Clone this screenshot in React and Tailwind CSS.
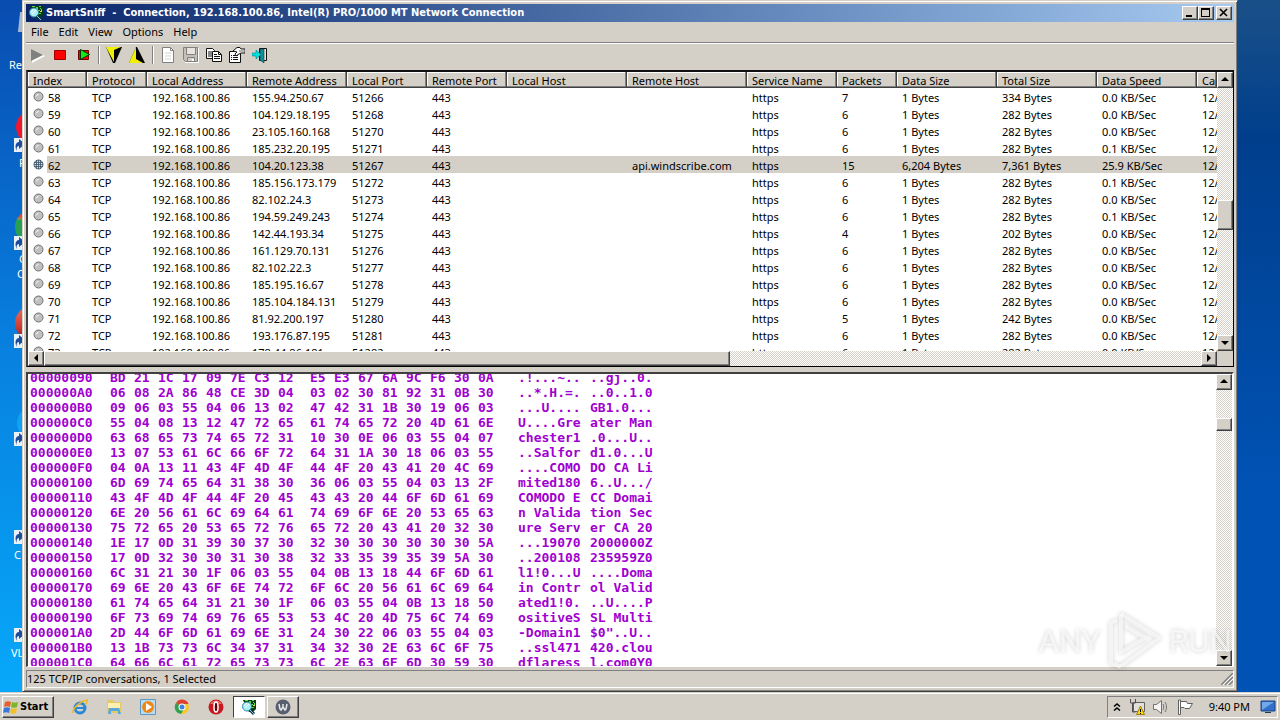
import React from "react";
import clsx from "clsx";

const columns = [
  { label: "Index", width: "w-[59px]" },
  { label: "Protocol", width: "w-[60px]" },
  { label: "Local Address", width: "w-[100px]" },
  { label: "Remote Address", width: "w-[100px]" },
  { label: "Local Port", width: "w-[80px]" },
  { label: "Remote Port", width: "w-[80px]" },
  { label: "Local Host", width: "w-[120px]" },
  { label: "Remote Host", width: "w-[120px]" },
  { label: "Service Name", width: "w-[90px]" },
  { label: "Packets", width: "w-[60px]" },
  { label: "Data Size", width: "w-[100px]" },
  { label: "Total Size", width: "w-[100px]" },
  { label: "Data Speed", width: "w-[100px]" },
  { label: "Cap", width: "" },
];

// index, remote address, local port, remote host, packets, data, total, speed
const rows = [
  [58, "155.94.250.67", 51266, "", 7, "1 Bytes", "334 Bytes", "0.0 KB/Sec"],
  [59, "104.129.18.195", 51268, "", 6, "1 Bytes", "282 Bytes", "0.0 KB/Sec"],
  [60, "23.105.160.168", 51270, "", 6, "1 Bytes", "282 Bytes", "0.0 KB/Sec"],
  [61, "185.232.20.195", 51271, "", 6, "1 Bytes", "282 Bytes", "0.1 KB/Sec"],
  [62, "104.20.123.38", 51267, "api.windscribe.com", 15, "6,204 Bytes", "7,361 Bytes", "25.9 KB/Sec"],
  [63, "185.156.173.179", 51272, "", 6, "1 Bytes", "282 Bytes", "0.1 KB/Sec"],
  [64, "82.102.24.3", 51273, "", 6, "1 Bytes", "282 Bytes", "0.0 KB/Sec"],
  [65, "194.59.249.243", 51274, "", 6, "1 Bytes", "282 Bytes", "0.1 KB/Sec"],
  [66, "142.44.193.34", 51275, "", 4, "1 Bytes", "202 Bytes", "0.0 KB/Sec"],
  [67, "161.129.70.131", 51276, "", 6, "1 Bytes", "282 Bytes", "0.0 KB/Sec"],
  [68, "82.102.22.3", 51277, "", 6, "1 Bytes", "282 Bytes", "0.0 KB/Sec"],
  [69, "185.195.16.67", 51278, "", 6, "1 Bytes", "282 Bytes", "0.0 KB/Sec"],
  [70, "185.104.184.131", 51279, "", 6, "1 Bytes", "282 Bytes", "0.0 KB/Sec"],
  [71, "81.92.200.197", 51280, "", 5, "1 Bytes", "242 Bytes", "0.0 KB/Sec"],
  [72, "193.176.87.195", 51281, "", 6, "1 Bytes", "282 Bytes", "0.0 KB/Sec"],
  [73, "178.44.86.181", 51282, "", 6, "1 Bytes", "282 Bytes", "0.0 KB/Sec"],
];

const dump = [
  "00000090 BD 21 1C 17 09 7E C3 12 E5 E3 67 6A 9C F6 30 0A",
  "000000A0 06 08 2A 86 48 CE 3D 04 03 02 30 81 92 31 0B 30",
  "000000B0 09 06 03 55 04 06 13 02 47 42 31 1B 30 19 06 03",
  "000000C0 55 04 08 13 12 47 72 65 61 74 65 72 20 4D 61 6E",
  "000000D0 63 68 65 73 74 65 72 31 10 30 0E 06 03 55 04 07",
  "000000E0 13 07 53 61 6C 66 6F 72 64 31 1A 30 18 06 03 55",
  "000000F0 04 0A 13 11 43 4F 4D 4F 44 4F 20 43 41 20 4C 69",
  "00000100 6D 69 74 65 64 31 38 30 36 06 03 55 04 03 13 2F",
  "00000110 43 4F 4D 4F 44 4F 20 45 43 43 20 44 6F 6D 61 69",
  "00000120 6E 20 56 61 6C 69 64 61 74 69 6F 6E 20 53 65 63",
  "00000130 75 72 65 20 53 65 72 76 65 72 20 43 41 20 32 30",
  "00000140 1E 17 0D 31 39 30 37 30 32 30 30 30 30 30 30 5A",
  "00000150 17 0D 32 30 30 31 30 38 32 33 35 39 35 39 5A 30",
  "00000160 6C 31 21 30 1F 06 03 55 04 0B 13 18 44 6F 6D 61",
  "00000170 69 6E 20 43 6F 6E 74 72 6F 6C 20 56 61 6C 69 64",
  "00000180 61 74 65 64 31 21 30 1F 06 03 55 04 0B 13 18 50",
  "00000190 6F 73 69 74 69 76 65 53 53 4C 20 4D 75 6C 74 69",
  "000001A0 2D 44 6F 6D 61 69 6E 31 24 30 22 06 03 55 04 03",
  "000001B0 13 1B 73 73 6C 34 37 31 34 32 30 2E 63 6C 6F 75",
  "000001C0 64 66 6C 61 72 65 73 73 6C 2E 63 6F 6D 30 59 30",
];

const toAscii = (bytes) =>
  bytes
    .map((b) => {
      const code = parseInt(b, 16);
      return code >= 0x20 && code < 0x7f ? String.fromCharCode(code) : ".";
    })
    .join("");

const raised =
  "border border-t-white border-l-white border-r-[#404040] border-b-[#404040] bg-[#d4d0c8] shadow-[inset_-1px_-1px_0_#808080]";
const dither =
  "bg-[repeating-conic-gradient(#ffffff_0_25%,#d4d0c8_0_50%)] bg-[length:2px_2px]";

function Icon({ children, size = "size-4", box = "0 0 16 16" }) {
  return (
    <svg className={clsx("shrink-0", size)} viewBox={box} aria-hidden="true">
      {children}
    </svg>
  );
}

function SnifferIcon({ size = "size-4" }) {
  return (
    <Icon size={size}>
      <path d="M2 1h13v9l-3 3H8L5 8z" fill="#0a3c14" />
      <path d="M4 1h3v1H4zM8 2h2v2H8zM11 1h2v1h-2zM13 4h1v3h-1zM10 5h2v1h-2zM10 8h3v1h-3zM12 3h1v1h-1z" fill="#58e048" />
      <path d="M12 6h2v1h-2zM9 4h1v1H9z" fill="#e8e040" />
      <circle cx="6" cy="7.500" r="4.500" fill="#a8f0f8" stroke="#3088a0" />
      <path d="M3 7l3-3M4 9l4-4" stroke="#fff" />
      <path d="M9 11l4 4" stroke="#103848" strokeWidth="3" />
      <path d="M9 11l4 4" stroke="#7cc8e0" />
    </Icon>
  );
}

function TitleBar() {
  const control =
    "flex h-[14px] w-4 items-center justify-center " + raised;
  return (
    <div className="flex h-[18px] shrink-0 items-center bg-linear-to-r from-[#0a246a] to-[#a6caf0] pr-[2px] pl-[2px]">
      <SnifferIcon />
      <h1 className="ml-[2px] flex-1 whitespace-pre font-['DejaVu_Sans_Condensed','Noto_Sans',sans-serif] text-[11px] font-bold text-white">
        SmartSniff  -  Connection, 192.168.100.86, Intel(R) PRO/1000 MT Network Connection
      </h1>
      <button className={control} aria-label="Minimize">
        <Icon size="h-3 w-3" box="0 0 12 12">
          <path d="M2 8h6v2H2z" />
        </Icon>
      </button>
      <button className={control} aria-label="Maximize">
        <Icon size="h-3 w-3" box="0 0 12 12">
          <path d="M1 1h9v9H1zM2 3v6h7V3z" fillRule="evenodd" />
        </Icon>
      </button>
      <button className={clsx(control, "ml-[2px]")} aria-label="Close">
        <Icon size="h-3 w-3" box="0 0 12 12">
          <path d="M2 2l7 7M9 2L2 9" stroke="#000" strokeWidth="1.600" />
        </Icon>
      </button>
    </div>
  );
}

function Separator() {
  return (
    <span className="mx-[3px] h-[18px] w-[2px] border-l border-l-[#808080] border-r border-r-white" />
  );
}

const tools = [
  {
    name: "Start capture",
    art: (
      <>
        <path d="M3 3l13 6-13 7z" fill="#fff" />
        <path d="M2 2l12 6-12 6z" fill="#808080" />
      </>
    ),
  },
  {
    name: "Stop capture",
    art: <path d="M2.500 3.500h11v9h-11z" fill="#f00" stroke="#a00000" />,
  },
  {
    name: "Restart capture",
    art: (
      <>
        <path d="M3.500 3.500h10v9h-10z" fill="#f00" stroke="#700000" />
        <path d="M5.500 2.500l9 5-9 5z" fill="#18e818" stroke="#003800" />
      </>
    ),
  },
  "sep",
  {
    name: "Capture filter",
    art: (
      <>
        <path d="M0 0h16L9 16H7z" fill="#000" />
        <path d="M0 0h15L8 3v12z" fill="#f0f000" />
      </>
    ),
  },
  {
    name: "Display filter",
    art: (
      <>
        <path d="M7 0h1l8 16H0z" fill="#000" />
        <path d="M7 0v12l7 4H0z" fill="#f0f000" />
      </>
    ),
  },
  "sep",
  {
    name: "New",
    art: (
      <>
        <path d="M2.500 .5h8l3 3v12h-11z" fill="#fff" stroke="#808080" />
        <path d="M10.500 .5v3h3" fill="none" stroke="#808080" />
        <path d="M5 6h6M5 9h6M5 12h6" stroke="#d4d0c8" />
      </>
    ),
  },
  {
    name: "Save",
    art: (
      <>
        <path d="M.5 .5h14v14H2.500l-2-2z" fill="#c4c0b8" stroke="#808080" />
        <path d="M3.500 .5h9v7h-9z" fill="#e8e4dc" stroke="#808080" />
        <path d="M4.500 10.500h7v4h-7z" fill="#d4d0c8" stroke="#808080" />
        <path d="M9 12h2v2H9z" fill="#fff" />
        <path d="M15.500 1v14.500H2" fill="none" stroke="#fff" />
      </>
    ),
  },
  {
    name: "Copy",
    art: (
      <>
        <path d="M.5 1.500h6l2 2v8h-8z" fill="#fff" stroke="#101010" />
        <path d="M2 5h4M2 7h4M2 9h4" stroke="#101010" />
        <path d="M6.500 4.500h6l3 3v7h-9z" fill="#fff" stroke="#101010" />
        <path d="M12.500 4.500v3h3M8 7.500h3M8 9.500h6M8 11.500h6" fill="none" stroke="#101010" />
      </>
    ),
  },
  {
    name: "Properties",
    art: (
      <>
        <path d="M.5 4.500h11v11H.5z" fill="#fff" stroke="#101010" />
        <path d="M2 8.500h1M4 8.500h5M2 10.500h1M4 10.500h5M2 12.500h1M4 12.500h5" stroke="#101010" />
        <path d="M4 4l4-3.500h3l1 1.500h4v4h-4l-2 1-3 2-1-2 2-2z" fill="#fff" stroke="#101010" />
        <path d="M10 3h5v2h-5z" fill="#b8b4ac" />
      </>
    ),
  },
  {
    name: "Exit",
    art: (
      <>
        <path d="M7.500 1.500h7v12h-7z" fill="#e8e4dc" stroke="#101010" />
        <path d="M8 2h4v14l-4-3z" fill="#109098" stroke="#003840" strokeWidth=".6" />
        <path d="M0 6h4V3l5 4.500L4 12V9H0z" fill="#00e0e0" stroke="#006868" strokeWidth=".5" />
      </>
    ),
  },
];

function Toolbar() {
  return (
    <div className="flex h-[27px] shrink-0 items-center border-t border-t-white pb-1">
      {tools.map((tool, i) =>
        tool === "sep" ? (
          <Separator key={i} />
        ) : (
          <button
            key={tool.name}
            aria-label={tool.name}
            className="flex h-[22px] w-[23px] items-center justify-start pl-[3px]"
          >
            <Icon>{tool.art}</Icon>
          </button>
        )
      )}
    </div>
  );
}

function Arrow({ dir, className }) {
  const d = {
    up: "M1 6h8L5 2z",
    down: "M1 3h8L5 7z",
    left: "M7 1v8L3 5z",
    right: "M3 1v8l4-4z",
  };
  return (
    <button
      aria-label={"Scroll " + dir}
      className={clsx("flex shrink-0 items-center justify-center", raised, className)}
    >
      <Icon size="size-[10px]" box="0 0 10 10">
        <path d={d[dir]} />
      </Icon>
    </button>
  );
}

function VScroll({ before, thumb, after }) {
  return (
    <div className={clsx("flex w-4 shrink-0 flex-col", dither)}>
      <Arrow dir="up" className="h-4 w-4" />
      <div className={before} />
      <div className={clsx("shrink-0", raised, thumb)} />
      <div className={after} />
      <Arrow dir="down" className="h-4 w-4" />
    </div>
  );
}

function StatusDot({ active }) {
  return (
    <Icon size="size-[11px]" box="0 0 11 11">
      {active ? (
        <>
          <circle cx="5.500" cy="5.500" r="4.500" fill="#c8dcf0" stroke="#506070" />
          <path d="M3.500 1v9M5.500 1v9M7.500 1v9M1 3.500h9M1 5.500h9M1 7.500h9" stroke="#405468" strokeWidth=".8" />
        </>
      ) : (
        <>
          <circle cx="5.500" cy="5.500" r="4.500" fill="#c0c0c0" stroke="#707070" />
          <path d="M3 5.500L5.500 3" stroke="#fff" />
        </>
      )}
    </Icon>
  );
}

function ConnectionList() {
  return (
    <section className="flex min-h-0 flex-[296_1_0%] flex-col border-t-2 border-r border-b border-l-2 border-t-[#101010] border-r-black border-b-black border-l-[#404040] bg-white">
      <div className="flex min-h-0 flex-1">
        <div className="min-w-0 flex-1 overflow-hidden">
          <table className="w-full table-fixed border-separate border-spacing-0">
            <thead>
              <tr className="h-4">
                {columns.map((col) => (
                  <th
                    key={col.label}
                    className={clsx(
                      "h-4 overflow-hidden whitespace-nowrap border-r border-b border-[#404040] bg-[#d4d0c8] pt-[2px] pl-[5px] text-left font-normal leading-[13px] shadow-[inset_-1px_-1px_0_#808080,inset_1px_1px_0_#ffffff]",
                      col.width
                    )}
                  >
                    {col.label}
                  </th>
                ))}
              </tr>
            </thead>
            <tbody>
              {rows.map(([index, remote, port, host, packets, data, total, speed]) => {
                const selected = index === 62;
                const cells = ["TCP", "192.168.100.86", remote, port, 443, "", host, "https", packets, data, total, speed, "12/"];
                return (
                  <tr key={index} className="h-[17px]">
                    <td className="p-0">
                      <div className="flex h-[17px] items-center pl-[5px]">
                        <StatusDot active={selected} />
                        <span
                          className={clsx(
                            "ml-[3px] flex-1 pt-[2px] pl-px leading-[15px]",
                            selected && "bg-[#d4d0c8]"
                          )}
                        >
                          {index}
                        </span>
                      </div>
                    </td>
                    {cells.map((cell, i) => (
                      <td
                        key={i}
                        className={clsx(
                          "overflow-hidden whitespace-nowrap pt-[2px] pr-0 pl-[5px] leading-[15px]",
                          selected && "bg-[#d4d0c8]"
                        )}
                      >
                        {cell}
                      </td>
                    ))}
                  </tr>
                );
              })}
            </tbody>
          </table>
        </div>
        <VScroll before="flex-[112]" thumb="h-[30px]" after="flex-[105]" />
      </div>
      <div className="flex h-[15px] shrink-0">
        <div className={clsx("flex flex-1", dither)}>
          <Arrow dir="left" className="h-[15px] w-4" />
          <div className={clsx("flex-[685]", raised)} />
          <div className="flex-[472]" />
          <Arrow dir="right" className="h-[15px] w-4" />
        </div>
        <div className="w-4 bg-[#d4d0c8]" />
      </div>
    </section>
  );
}

function HexView() {
  return (
    <section className="flex min-h-0 flex-[295_1_0%] border-t-2 border-r-2 border-b border-l-2 border-t-[#404040] border-r-white border-b-white border-l-[#404040] bg-white">
      <div className="min-w-0 flex-1 overflow-hidden pl-[2px]">
        <table className="-mt-1 w-[624px] table-fixed border-collapse font-['DejaVu_Sans_Mono',monospace] text-[13px] font-bold text-[#a000d0]">
          <colgroup>
            <col className="w-20" />
            {Array.from({ length: 16 }, (_, i) => (
              <col key={i} className={i === 7 ? "w-8" : i === 15 ? "w-10" : "w-6"} />
            ))}
            <col className="w-[72px]" />
            <col className="w-16" />
          </colgroup>
          <tbody>
            {dump.map((line) => {
              const [offset, ...bytes] = line.split(" ");
              return (
                <tr key={offset} className="h-[15px] leading-[15px]">
                  <td className="p-0">{offset}</td>
                  {bytes.map((b, i) => (
                    <td key={i} className="p-0">
                      {b}
                    </td>
                  ))}
                  <td className="whitespace-pre p-0">{toAscii(bytes.slice(0, 8))}</td>
                  <td className="whitespace-pre p-0">{toAscii(bytes.slice(8))}</td>
                </tr>
              );
            })}
          </tbody>
        </table>
      </div>
      <VScroll before="flex-[28]" thumb="h-[13px]" after="flex-[219]" />
    </section>
  );
}

function Watermark() {
  return (
    <div className="pointer-events-none absolute right-[5px] bottom-[20px] flex items-center gap-[6px] font-['Roboto',sans-serif] text-[32px] leading-[56px] text-white/60 drop-shadow-[0_0_2px_rgba(0,0,0,0.3)]">
      <span>ANY</span>
      <svg className="h-[60px] w-[56px]" viewBox="0 0 56 60" fill="none" stroke="currentColor" strokeWidth="4" aria-hidden="true">
        <path d="M14 3l38 24-38 28" strokeLinejoin="round" />
        <path d="M14 3v38l24-14-20-12" strokeLinejoin="round" />
        <path d="M10 9l-6 3v40l10 4" strokeLinejoin="round" />
      </svg>
      <span>RUN</span>
    </div>
  );
}

function SnifferWindow() {
  return (
    <main className="relative flex min-w-0 flex-1 flex-col border border-t-[#d4d0c8] border-r-[#404040] border-b-[#404040] border-l-[#d4d0c8] bg-[#d4d0c8] p-[3px] shadow-[inset_1px_1px_0_#ffffff,inset_-1px_-1px_0_#808080]">
      <TitleBar />
      <nav className="flex h-[21px] shrink-0 items-center gap-[10px] border-b border-b-[#808080] pl-[5px] text-[11px]">
        {["File", "Edit", "View", "Options", "Help"].map((item) => (
          <button key={item}>{item}</button>
        ))}
      </nav>
      <Toolbar />
      <ConnectionList />
      <div className="h-[5px] shrink-0" />
      <HexView />
      <footer className="mt-[3px] flex h-[18px] shrink-0 items-center border border-t-[#808080] border-r-white border-b-white border-l-[#808080]">
        <span className="flex-1">125 TCP/IP conversations, 1 Selected</span>
        <Icon size="size-3" box="0 0 12 12">
          <path d="M0 12L12 0M4 12l8-8M8 12l4-4" stroke="#808080" strokeWidth="1.500" />
          <path d="M2 12L12 2M6 12l6-6" stroke="#fff" />
        </Icon>
      </footer>
      <Watermark />
    </main>
  );
}

function Shortcut({ className, label, labelClass, children }) {
  return (
    <div className={clsx("absolute left-[14px]", className)}>
      {children}
      <svg className="relative size-[14px]" viewBox="0 0 14 14" aria-hidden="true">
        <path d="M0 0h14v14H0z" fill="#e8f0f8" />
        <path d="M3 13C0 8 2 4 5 4V1l6 5-6 5V8C3 8 2 10 3 13z" fill="#1c4c9c" />
      </svg>
      <span className={clsx("absolute whitespace-nowrap text-white", labelClass)}>{label}</span>
    </div>
  );
}

function DesktopEdge() {
  return (
    <aside className="relative w-[22px] shrink-0 overflow-hidden bg-linear-to-b from-[#0a4cb0] via-[#0880e0] via-50% to-[#08a8fa]">
      <div className="absolute top-[12px] left-[19px] h-5 w-3 -skew-x-6 bg-[#a8b8d0]" />
      <span className="absolute top-[57px] left-[9px] text-white">Re</span>
      <Shortcut className="top-[138px]" label="F" labelClass="top-[17px] left-[5px]">
        <div className="absolute -top-[28px] left-[2px] size-[34px] rounded-full bg-[#f01830]" />
      </Shortcut>
      <Shortcut className="top-[236px]" label="G" labelClass="top-[15px] left-[5px]">
        <div className="absolute -top-[26px] left-[1px] size-[34px] rounded-full bg-linear-to-b from-[#e04830] from-20% to-[#28a050] to-30%" />
      </Shortcut>
      <span className="absolute top-[266px] left-[17px] text-white">C</span>
      <Shortcut className="top-[334px]">
        <div className="absolute -top-[28px] left-[1px] size-[34px] rounded-full bg-linear-to-b from-[#f07060] to-[#b01010]" />
      </Shortcut>
      <Shortcut className="top-[432px]">
        <div className="absolute -top-[26px] left-[3px] size-[34px] rounded-full bg-[#10a4f0]" />
      </Shortcut>
      <Shortcut className="top-[530px]" label="C" labelClass="top-[17px] left-0" />
      <Shortcut className="top-[628px]" label="VL" labelClass="top-[17px] -left-[3px]" />
    </aside>
  );
}

function Taskbar() {
  const quick = [
    {
      name: "Internet Explorer",
      art: (
        <>
          <circle cx="8" cy="9" r="5" fill="none" stroke="#2888d8" strokeWidth="3" />
          <path d="M4 9h9" stroke="#2888d8" strokeWidth="2" />
          <path d="M1 14C0 10 8 2 15 1c1 2-1 4-2 5" fill="none" stroke="#f0b820" strokeWidth="1.500" />
        </>
      ),
    },
    {
      name: "Explorer",
      art: (
        <>
          <path d="M1 1h6l1 2h7v11H1z" fill="#e8c860" />
          <path d="M2 4h12v5H2z" fill="#fff0b0" />
          <path d="M3 9h10l2 6h-3v-3H5v3H2z" fill="#58a8e0" />
        </>
      ),
    },
    {
      name: "Media Player",
      art: (
        <>
          <path d="M.5 .5h15v15H.5z" fill="#b8dcf4" stroke="#5898c8" />
          <circle cx="8" cy="8" r="6" fill="#f08818" />
          <path d="M6 4l6 4-6 4z" fill="#fff" />
        </>
      ),
    },
    {
      name: "Chrome",
      art: (
        <>
          <circle cx="8" cy="8" r="7" fill="#f8c828" />
          <path d="M8 8L2 4a7 7 0 0 1 12.500 1H8z" fill="#e04030" />
          <path d="M8 8L2 4a7 7 0 0 0 5 11l3-5z" fill="#30a050" />
          <circle cx="8" cy="8" r="3.500" fill="#fff" />
          <circle cx="8" cy="8" r="2.500" fill="#4080e0" />
        </>
      ),
    },
    {
      name: "Opera",
      art: (
        <>
          <circle cx="8" cy="8" r="7.500" fill="#c81820" />
          <path d="M2 5a7 7 0 0 1 12 0z" fill="#e86860" />
          <ellipse cx="8" cy="8" rx="2" ry="5" fill="#600008" stroke="#fff" strokeWidth="1.500" />
        </>
      ),
    },
  ];
  return (
    <footer className="flex h-7 shrink-0 items-center border-t border-t-[#d4d0c8] bg-[#d4d0c8] pr-[2px] pl-[2px] shadow-[inset_0_1px_0_#ffffff]">
      <button className={clsx("flex h-[22px] w-[52px] items-center justify-start gap-px font-['DejaVu_Sans_Condensed','Noto_Sans',sans-serif] text-[11px] font-bold", raised)}>
        <Icon>
          <path d="M2 3c2-1 4-1 6 0L7 8C5 7 3 7 1 8z" fill="#e86028" />
          <path d="M9 3c2 1 4 1 6 0l-1 5c-2 1-4 1-6 0z" fill="#78b828" />
          <path d="M1 9c2-1 4-1 6 0l-1 5c-2-1-4-1-6 0z" fill="#3878d8" />
          <path d="M8 9c2 1 4 1 6 0l-1 5c-2 1-4 1-6 0z" fill="#f0c028" />
        </Icon>
        Start
      </button>
      <div className="ml-[9px] flex">
        {quick.map((item) => (
          <button key={item.name} aria-label={item.name} className="flex h-[22px] w-[34px] items-center justify-center">
            <Icon>{item.art}</Icon>
          </button>
        ))}
      </div>
      <button
        aria-label="SmartSniff"
        className="flex h-[22px] w-8 items-center justify-center border border-t-[#404040] border-r-white border-b-white border-l-[#404040] bg-white"
      >
        <SnifferIcon />
      </button>
      <button aria-label="Windscribe" className={clsx("ml-[2px] flex h-[22px] w-8 items-center justify-center", raised)}>
        <Icon>
          <circle cx="8" cy="8" r="7.500" fill="#586070" />
          <path d="M4 5l1 5 1 1 2-3 2 3 1-1 1-5M8 5v3" fill="none" stroke="#e8ecf0" strokeWidth="1.500" />
        </Icon>
      </button>
      <div className="flex-1" />
      <div className="flex h-[22px] items-center border border-t-[#808080] border-r-white border-b-white border-l-[#808080] pr-px pl-[5px]">
        <button aria-label="Show hidden icons">
          <Icon size="size-2" box="0 0 8 8">
            <path d="M1 3.500L4 1l3 2.500M1 7.500L4 5l3 2.500" fill="none" stroke="#000" strokeWidth="1.500" />
          </Icon>
        </button>
        <span className="ml-[8px] flex gap-2">
          <Icon>
            <path d="M4.500 3.500h11v9h-11z" fill="#e0e0dc" stroke="#606060" />
            <path d="M1.500 0v4h5V0M3.500 4v9h3" fill="none" stroke="#505050" />
            <path d="M11.500 7l4 8.500h-8z" fill="#f8d820" stroke="#a08000" />
            <path d="M11.500 10v3M11.500 14v1" stroke="#000" />
          </Icon>
          <Icon>
            <path d="M.5 5.500h3l5-4v13l-5-4h-3z" fill="#f4f4f4" stroke="#707070" />
            <path d="M10 5c1 2 1 4 0 6M12 3c2 3 2 7 0 10" fill="none" stroke="#707070" />
          </Icon>
          <Icon>
            <path d="M1.500 1v14.500h2V1z" fill="#fff" stroke="#606060" />
            <path d="M3.500 2.500h6l1 2h5l-3 5H8l-1-1H3.500z" fill="#fff" stroke="#606060" />
          </Icon>
        </span>
        <time className="mr-[10px] ml-4 text-[11px]">9:40 PM</time>
        <button aria-label="Show desktop">
          <Icon>
            <path d="M1 2h14v10H1z" fill="#3070c8" stroke="#184080" />
            <path d="M2 3h12l-12 8z" fill="#70a8e8" />
            <path d="M5 13h6v1H5z" fill="#203860" />
          </Icon>
        </button>
      </div>
    </footer>
  );
}

export default function App() {
  return (
    <div className="flex h-screen flex-col overflow-hidden font-['Noto_Sans','Liberation_Sans',sans-serif] text-[11px] leading-4 text-black">
      <div className="flex min-h-0 flex-1">
        <DesktopEdge />
        <SnifferWindow />
        <aside className="w-[42px] shrink-0 bg-linear-to-b from-[#1a5088] via-[#003e8c] via-20% to-[#0052b4] to-70%" />
      </div>
      <Taskbar />
    </div>
  );
}
